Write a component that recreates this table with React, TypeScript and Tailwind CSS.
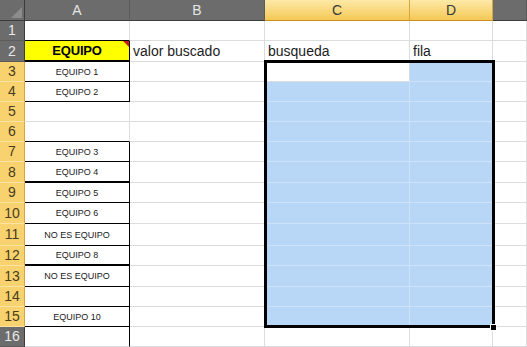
import React from 'react';

// Worksheet snapshot: columns A–D, rows 1–16, with C3:D15 selected.
const COLS = ['A', 'B', 'C', 'D', ''];
const SELECTED_COLS = [2, 3];
const ROWS = Array.from({ length: 16 }, (_, i) => i + 1);

const teams: Record<number, string> = {
  3: 'EQUIPO 1',
  4: 'EQUIPO 2',
  7: 'EQUIPO 3',
  8: 'EQUIPO 4',
  9: 'EQUIPO 5',
  10: 'EQUIPO 6',
  11: 'NO ES EQUIPO',
  12: 'EQUIPO 8',
  13: 'NO ES EQUIPO',
  15: 'EQUIPO 10',
};

const boxedRight = new Set([2, 3, 4, 7, 8, 9, 10, 11, 12, 13, 14, 15, 16]);
const boxedBottom = new Set([1, 3, 4, 6, 7, 9, 10, 11, 13, 14, 15]);
const thickBottom = new Set([2, 8, 12]);

const font = { fontFamily: '"Liberation Sans", Arial, sans-serif' };

function ColumnHeader({ label, index }: { label: string; index: number }) {
  const selected = SELECTED_COLS.includes(index);
  return (
    <div
      className={
        selected
          ? 'flex items-center justify-center border-r border-b border-r-[#d9a63d] border-b-[#c98f22] bg-gradient-to-b from-[#fde9a6] to-[#f5c853] text-[14px] text-[#3a3a3a]'
          : 'flex items-center justify-center border-r border-b border-r-[#5c5c5c] border-b-[#3c3c3c] bg-[#6c6c6c] text-[14px] text-[#e4e4e4]'
      }
    >
      {label}
    </div>
  );
}

function RowHeader({ row }: { row: number }) {
  const selected = row >= 3 && row <= 15;
  return (
    <div
      className={
        selected
          ? 'flex items-center justify-center border-r border-b border-r-[#d9a63d] border-b-[#fbe3a0] bg-[#f7d26f] text-[14px] text-[#4a3c1c]'
          : 'flex items-center justify-center border-r border-b border-r-[#3c3c3c] border-b-[#5c5c5c] bg-[#6c6c6c] text-[14px] text-[#e8e8e8]'
      }
    >
      {row}
    </div>
  );
}

function TeamCell({ row }: { row: number }) {
  const right = boxedRight.has(row) ? 'border-r-black' : 'border-r-[#dadcdd]';
  const bottom = thickBottom.has(row)
    ? 'border-b-2 border-b-black'
    : boxedBottom.has(row)
      ? 'border-b border-b-black'
      : 'border-b border-b-[#dadcdd]';

  if (row === 2) {
    return (
      <div className={`relative flex items-center justify-center border-r bg-[#ffff00] ${right} ${bottom}`}>
        <span className="text-[13px] font-bold tracking-[-0.2px] text-black">EQUIPO</span>
        {/* comment marker */}
        <svg className="absolute right-0 top-0" width="6" height="6" viewBox="0 0 6 6">
          <polygon points="0,0 6,0 6,6" fill="#c0201b" />
        </svg>
      </div>
    );
  }

  return (
    <div className={`flex items-center justify-center border-r ${right} ${bottom}`}>
      <span className="pt-[2px] text-[9px] text-[#1a1a1a]">{teams[row] ?? ''}</span>
    </div>
  );
}

function Cell({ row, col }: { row: number; col: number }) {
  const inSelection = (col === 2 || col === 3) && row >= 3 && row <= 15;
  const active = col === 2 && row === 3;

  let text = '';
  if (row === 2 && col === 1) text = 'valor buscado';
  if (row === 2 && col === 2) text = 'busqueda';
  if (row === 2 && col === 3) text = 'fila';

  if (inSelection) {
    return (
      <div
        className={
          active
            ? 'border-r border-b border-[#dadcdd] bg-white'
            : 'border-r border-b border-[#cfe2f7] bg-[#b8d6f6]'
        }
      />
    );
  }

  return (
    <div className="flex items-center overflow-visible whitespace-nowrap border-r border-b border-[#dadcdd] bg-white pl-[3px]">
      {text && <span className="pt-[1px] text-[14px] text-[#1c1c1c]">{text}</span>}
    </div>
  );
}

export default function App() {
  return (
    <div className="relative h-[347px] w-[527px] overflow-hidden bg-white" style={font}>
      <div className="grid grid-cols-[25px_105px_135px_145px_83px_34px] grid-rows-[21px_20px_21px_20px_20px_20px_20px_20px_21px_20px_21px_22px_20px_21px_20px_20px_20px]">
        {/* select-all corner */}
        <div className="relative border-r border-b border-r-[#3c3c3c] border-b-[#3c3c3c] bg-[#6c6c6c]">
          <svg className="absolute bottom-[2px] right-[2px]" width="11" height="11" viewBox="0 0 11 11">
            <polygon points="11,0 11,11 0,11" fill="#8c8c8c" />
          </svg>
        </div>
        {COLS.map((c, i) => (
          <ColumnHeader key={i} label={c} index={i} />
        ))}

        {ROWS.map((row) => (
          <React.Fragment key={row}>
            <RowHeader row={row} />
            <TeamCell row={row} />
            <Cell row={row} col={1} />
            <Cell row={row} col={2} />
            <Cell row={row} col={3} />
            <Cell row={row} col={4} />
          </React.Fragment>
        ))}
      </div>

      {/* selection outline C3:D15 and fill handle */}
      <div className="pointer-events-none absolute left-[264px] top-[60px] h-[268px] w-[231px] border-[3px] border-black" />
      <div className="pointer-events-none absolute left-[490px] top-[324px] h-[7px] w-[7px] border border-white bg-black" />
    </div>
  );
}
